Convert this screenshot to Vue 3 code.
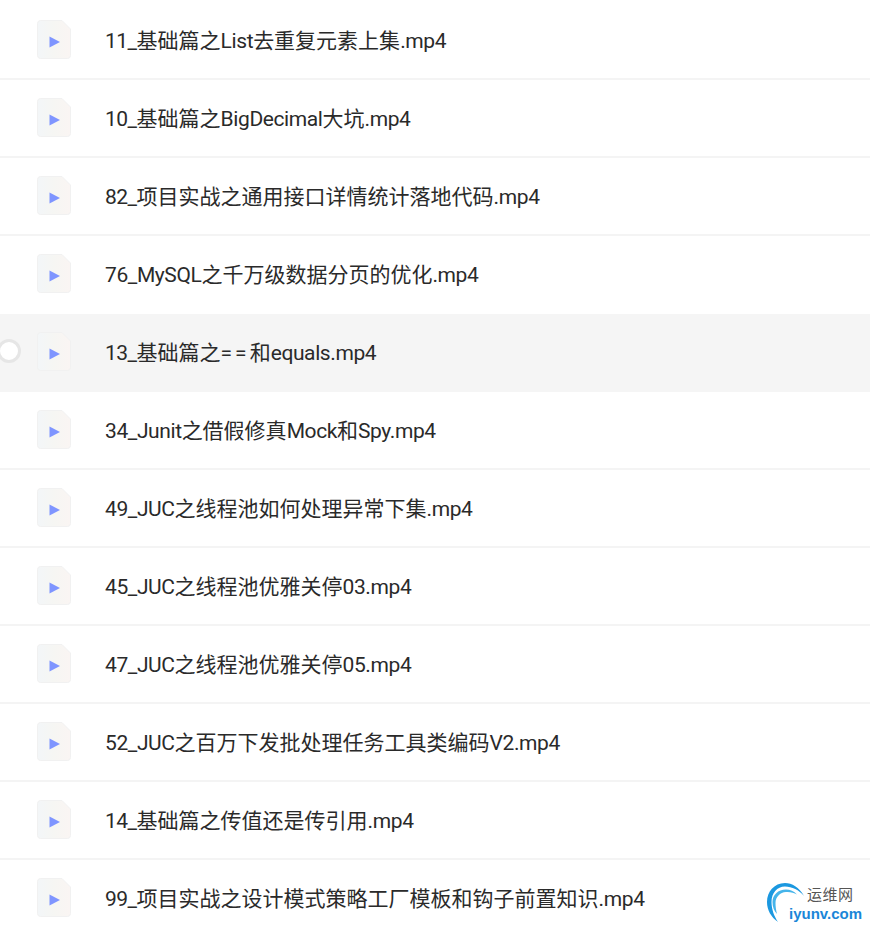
<script setup>
const names = [
  '11_基础篇之List去重复元素上集.mp4',
  '10_基础篇之BigDecimal大坑.mp4',
  '82_项目实战之通用接口详情统计落地代码.mp4',
  '76_MySQL之千万级数据分页的优化.mp4',
  '13_基础篇之==和equals.mp4',
  '34_Junit之借假修真Mock和Spy.mp4',
  '49_JUC之线程池如何处理异常下集.mp4',
  '45_JUC之线程池优雅关停03.mp4',
  '47_JUC之线程池优雅关停05.mp4',
  '52_JUC之百万下发批处理任务工具类编码V2.mp4',
  '14_基础篇之传值还是传引用.mp4',
  '99_项目实战之设计模式策略工厂模板和钩子前置知识.mp4',
]
const files = names.map((name) => ({
  name,
  runs: name.split(/([\x00-\x7f]+)/).filter(Boolean),
}))
const runClass = (run) => {
  if (run === '==') return 'wide'
  if (/^[\x00-\x7f]/.test(run)) return /^[0-9_]+$/.test(run) ? 'digits' : 'latin'
  return ''
}
</script>

<template>
  <div class="page">
    <div
      v-for="(file, i) in files"
      :key="file.name"
      class="row"
      :class="{ active: i === 4, 'before-active': i === 3 }"
    >
      <span v-if="i === 4" class="radio"></span>
      <svg class="icon" width="34" height="39" viewBox="0 0 34 39">
        <defs>
          <linearGradient :id="'g' + i" x1="0" y1="0" x2="1" y2="0">
            <stop offset="0" stop-color="#f3f6f8" />
            <stop offset="0.5" stop-color="#f6f6f3" />
            <stop offset="1" stop-color="#faf5f3" />
          </linearGradient>
        </defs>
        <path
          d="M3.500 .5H25L33.500 9V35.500A3 3 0 0 1 30.500 38.500H3.500A3 3 0 0 1 .5 35.500V3.500A3 3 0 0 1 3.500 .5Z"
          :fill="'url(#g' + i + ')'"
          stroke="#f1f1f1"
        />
        <path d="M12.500 16.500L23 22L12.500 27.500Z" fill="#7f95ff" />
      </svg>
      <span class="name"><span v-for="(run, r) in file.runs" :key="r" :class="runClass(run)">{{ run }}</span></span>
    </div>
    <div class="logo">
      <svg class="logo-mark" width="52" height="46" viewBox="0 0 52 46">
        <path d="M38 14C33 5 26 1 19 1C8 1 1 10 1 20C1 28 5 35 12 40C8 34 5.500 27 5.500 20C5.500 11 11 4.500 19 4.500C26 4.500 33 8 38 14Z" fill="#1b98e0" />
        <path d="M31 12.500C28 9 24 7.500 20 7.500C12 7.500 6.500 13 6.500 20C6.500 25 8 29 11 32C10 28 9.500 25 9.500 21C9.500 15 14 10.500 20 10C24 9.700 28 10.500 31 12.500Z" fill="#45b4ea" />
      </svg>
      <span class="logo-cn">运维网</span>
      <span class="logo-en">iyunv.com</span>
    </div>
  </div>
</template>

<style scoped>
.page {
  position: relative;
  width: 870px;
  height: 930px;
  padding-top: 2px;
  box-sizing: border-box;
  overflow: hidden;
  background: #fff;
  font-family: Roboto, "Noto Sans CJK SC", sans-serif;
}
.row {
  position: relative;
  display: flex;
  align-items: center;
  gap: 34px;
  height: 74px;
  padding: 0 0 2px 37px;
  border-bottom: 2px solid #f4f4f4;
}
.row.active {
  background: #f5f5f5;
  border-bottom-color: #f5f5f5;
}
.row.before-active {
  border-bottom-color: transparent;
}
.radio {
  position: absolute;
  left: -3px;
  top: 25px;
  width: 18px;
  height: 18px;
  border: 3px solid #e6e6e6;
  border-radius: 50%;
  background: #fff;
}
.icon {
  flex: none;
}
.name {
  font-size: 21px;
  color: #2a2a2a;
  white-space: nowrap;
}
.latin {
  letter-spacing: -0.4px;
}
.digits {
  letter-spacing: -0.5px;
}
.wide {
  letter-spacing: 3px;
}
.logo {
  position: absolute;
  left: 766px;
  top: 882px;
  width: 104px;
  height: 46px;
}
.logo-mark {
  position: absolute;
  left: 0;
  top: 0;
}
.logo-cn {
  position: absolute;
  left: 41px;
  top: 3px;
  font-size: 15px;
  line-height: 20px;
  color: #555;
  letter-spacing: 0.5px;
}
.logo-en {
  position: absolute;
  left: 23px;
  top: 22px;
  font-family: "Liberation Sans", sans-serif;
  font-size: 15px;
  font-weight: 700;
  line-height: 20px;
  color: #1a86d8;
}
</style>
